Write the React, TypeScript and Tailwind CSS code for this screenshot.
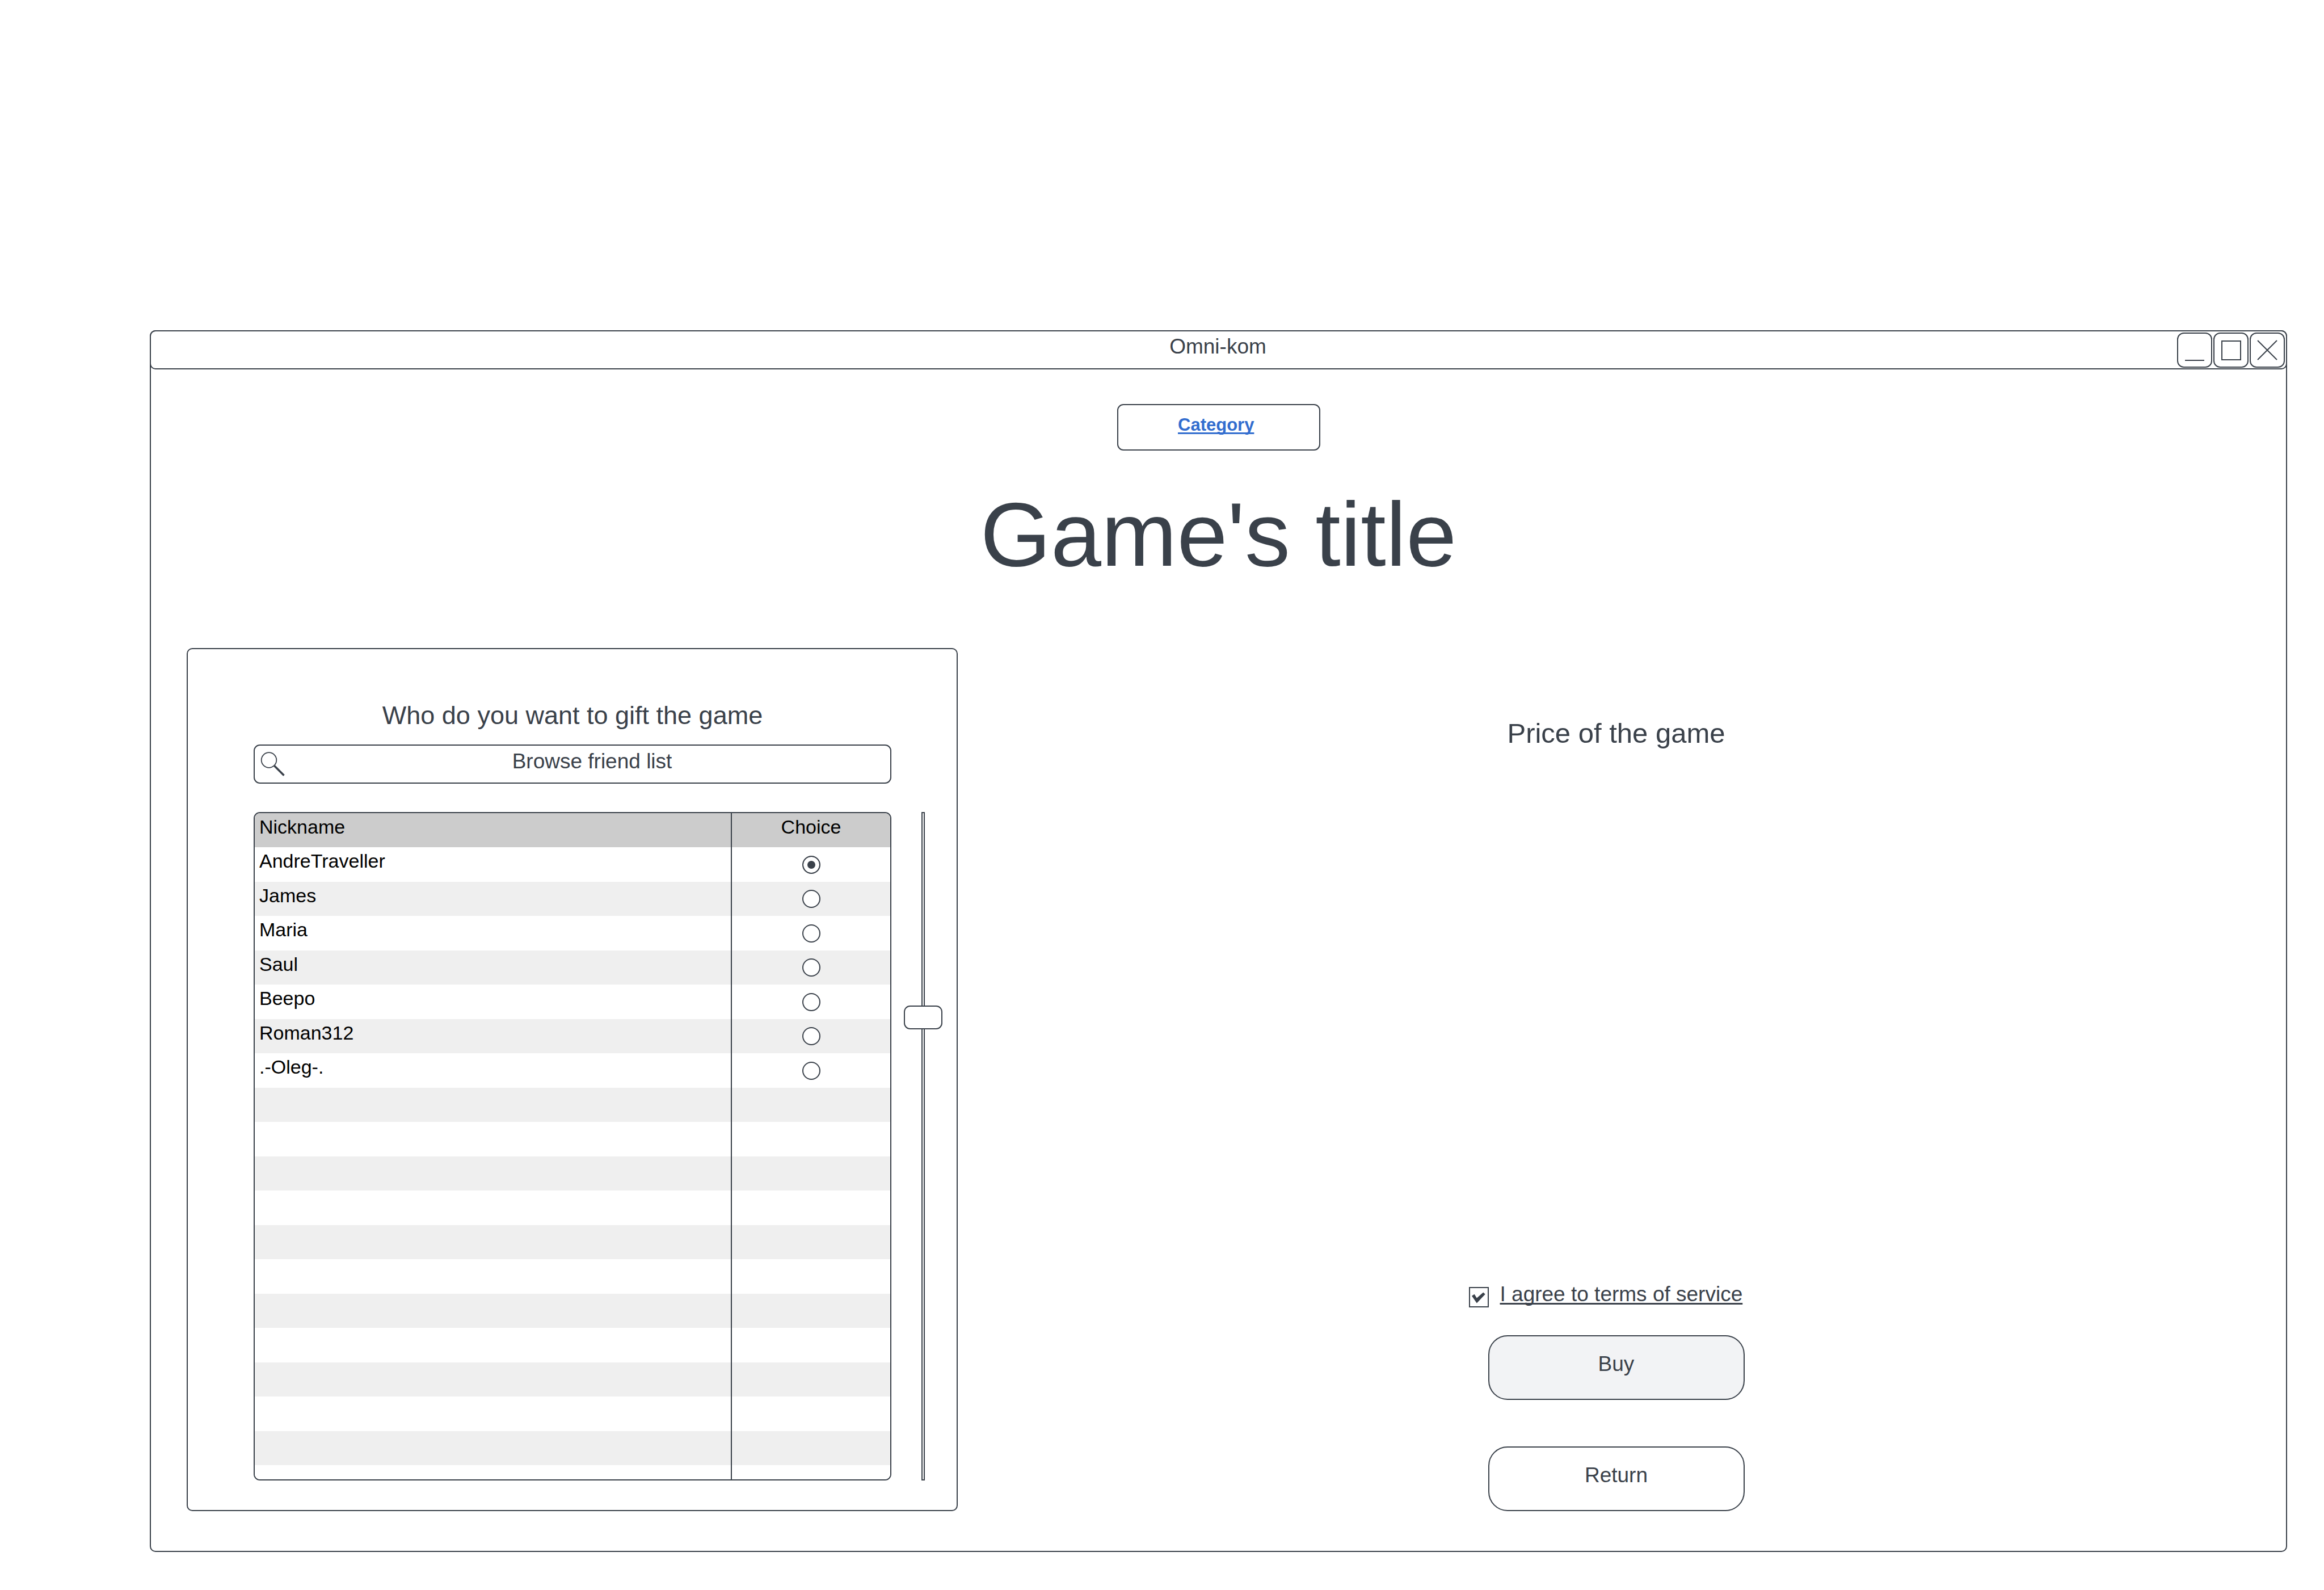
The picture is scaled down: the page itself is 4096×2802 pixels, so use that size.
import { useState } from "react";

const friends = ["AndreTraveller", "James", "Maria", "Saul", "Beepo", "Roman312", ".-Oleg-."];
const ROW_COUNT = 18;

function WindowButton({ label, d }: { label: string; d: string }) {
  return (
    <button
      type="button"
      aria-label={label}
      className="size-[62px] rounded-[12px] border-2 border-[#3a414a] bg-white"
    >
      <svg viewBox="0 0 58 58" className="block size-full" fill="none" stroke="currentColor" strokeWidth="2">
        <path d={d} />
      </svg>
    </button>
  );
}

function TitleBar() {
  return (
    <header className="-mx-0.5 -mt-0.5 grid h-[69px] grid-cols-[1fr_auto_1fr] items-center rounded-[10px] border-2 border-[#3a414a] pr-0.5">
      <span className="col-start-2 pb-3 text-[37px] leading-[44px]">Omni-kom</span>
      <div className="flex gap-0.5 justify-self-end">
        <WindowButton label="Minimize" d="M12 47H46" />
        <WindowButton label="Maximize" d="M13 13H46V46H13Z" />
        <WindowButton label="Close" d="M12 12L46 46M46 12L12 46" />
      </div>
    </header>
  );
}

function FriendTable() {
  const [choice, setChoice] = useState(friends[0]);
  return (
    <div className="min-w-0 flex-1 overflow-hidden rounded-[11px] border-2 border-[#3a414a]">
      <table className="w-full table-fixed border-collapse text-[34px] leading-[48px] text-black">
        <colgroup>
          <col className="w-[75%]" />
          <col className="w-[25%]" />
        </colgroup>
        <thead>
          <tr className="h-[60px] bg-[#cccccc]">
            <th scope="col" className="border-r-2 border-[#3a414a] p-0 pl-2 text-left align-top font-normal">
              Nickname
            </th>
            <th scope="col" className="p-0 text-center align-top font-normal">
              Choice
            </th>
          </tr>
        </thead>
        <tbody>
          {Array.from({ length: ROW_COUNT }, (_, i) => {
            const name = friends[i];
            return (
              <tr key={i} className="h-[61px] bg-white even:h-[60px] even:bg-[#efefef]">
                <td className="border-r-2 border-[#3a414a] p-0 pl-2 align-top">{name}</td>
                <td className="p-0 align-middle">
                  {name && (
                    <input
                      type="radio"
                      name="friend"
                      aria-label={name}
                      checked={choice === name}
                      onChange={() => setChoice(name)}
                      className="mx-auto block size-8 appearance-none rounded-full border-2 border-[#3a414a] bg-white checked:bg-[#3a414a] checked:shadow-[inset_0_0_0_7px_white]"
                    />
                  )}
                </td>
              </tr>
            );
          })}
          <tr className="h-[25px] bg-white">
            <td className="border-r-2 border-[#3a414a] p-0" />
            <td className="p-0" />
          </tr>
        </tbody>
      </table>
    </div>
  );
}

function ScrollSlider() {
  const [value, setValue] = useState(30);
  return (
    <input
      type="range"
      aria-label="Scroll friend list"
      min={0}
      max={100}
      value={value}
      onChange={(e) => setValue(Number(e.target.value))}
      className="m-0 h-auto w-[68px] shrink-0 appearance-none self-stretch [background:linear-gradient(#fff,#fff)_center/2px_calc(100%-4px)_no-repeat,linear-gradient(#3a414a,#3a414a)_center/6px_100%_no-repeat] [writing-mode:vertical-lr] [&::-webkit-slider-thumb]:h-[42px] [&::-webkit-slider-thumb]:w-[68px] [&::-webkit-slider-thumb]:appearance-none [&::-webkit-slider-thumb]:rounded-[11px] [&::-webkit-slider-thumb]:border-2 [&::-webkit-slider-thumb]:border-solid [&::-webkit-slider-thumb]:border-[#3a414a] [&::-webkit-slider-thumb]:bg-white"
    />
  );
}

function FriendPanel() {
  return (
    <section className="rounded-[10px] border-2 border-[#3a414a] pt-[90px] pr-[25px] pb-[52px] pl-[116px]">
      <div className="mr-[90px]">
        <h2 className="text-center text-[45px] leading-[54px]">Who do you want to gift the game</h2>
        <label className="mt-6 flex h-[69px] rounded-[11px] border-2 border-[#3a414a]">
          <svg viewBox="0 0 69 65" className="h-[65px] w-[69px] shrink-0" fill="none" stroke="currentColor">
            <circle cx="25" cy="25.5" r="13.3" strokeWidth="1.8" />
            <path d="M34.5 35.5L51.5 52.5" strokeWidth="3.6" />
          </svg>
          <input
            type="text"
            aria-label="Browse friend list"
            placeholder="Browse friend list"
            className="min-w-0 flex-1 bg-transparent pb-2.5 text-center text-[37px] outline-none placeholder:text-[#3a414a] placeholder:opacity-100"
          />
        </label>
      </div>
      <div className="mt-[50px] flex gap-[22px]">
        <FriendTable />
        <ScrollSlider />
      </div>
    </section>
  );
}

function PurchasePanel() {
  const [agreed, setAgreed] = useState(true);
  return (
    <section className="flex flex-col items-center pt-[120px] pr-5">
      <h2 className="text-[49px] leading-[60px]">Price of the game</h2>
      <div className="mt-auto flex w-[452px] flex-col items-end">
        <div className="flex w-[486px] items-start gap-5 whitespace-nowrap">
          <span className="relative block h-9 w-[35px] shrink-0">
            <input
              id="terms"
              type="checkbox"
              checked={agreed}
              onChange={(e) => setAgreed(e.target.checked)}
              className="block size-full appearance-none border-2 border-[#3a414a] bg-white"
            />
            {agreed && (
              <svg viewBox="0 0 35 36" className="pointer-events-none absolute inset-0 size-full" fill="currentColor">
                <path d="M5 15.8L9.6 12.8L13.8 19.4L25.2 9.6L28.7 12.8L13.8 28.4Z" />
              </svg>
            )}
          </span>
          <label
            htmlFor="terms"
            className="text-[37px] leading-[26px] underline decoration-[3px] underline-offset-[3px] [text-decoration-skip-ink:none]"
          >
            I agree to terms of service
          </label>
        </div>
        <button
          type="button"
          className="mt-[49px] h-[114px] w-full rounded-[34px] border-2 border-[#3a414a] bg-[#f2f3f5] pb-3 text-[37px]"
        >
          Buy
        </button>
        <button
          type="button"
          className="mt-[82px] h-[114px] w-full rounded-[34px] border-2 border-[#3a414a] bg-white pb-3 text-[37px]"
        >
          Return
        </button>
      </div>
    </section>
  );
}

export default function App() {
  return (
    <div className="min-h-screen bg-white pt-[582px] pr-[65px] pb-[67px] pl-[264px] font-['Liberation_Sans',Arial,sans-serif] text-[#3a414a]">
      <div className="rounded-[10px] border-2 border-[#3a414a]">
        <TitleBar />
        <main className="pt-[61px] pb-[70px] pl-[63px]">
          <div className="-ml-[63px] flex flex-col items-center">
            <div className="flex h-[82px] w-[358px] items-center justify-center rounded-[11px] border-2 border-[#3a414a] pb-2 text-[31px] font-bold">
              <a
                href="#category"
                className="text-[#326dcf] underline decoration-[3px] underline-offset-[3px] [text-decoration-skip-ink:none]"
              >
                Category
              </a>
              {"\u00a0"}
            </div>
            <h1 className="mt-[68px] text-[160px] leading-[160px]">Game's title</h1>
          </div>
          <div className="mt-[120px] grid grid-cols-[minmax(0,1359fr)_minmax(0,2341fr)]">
            <FriendPanel />
            <PurchasePanel />
          </div>
        </main>
      </div>
    </div>
  );
}
